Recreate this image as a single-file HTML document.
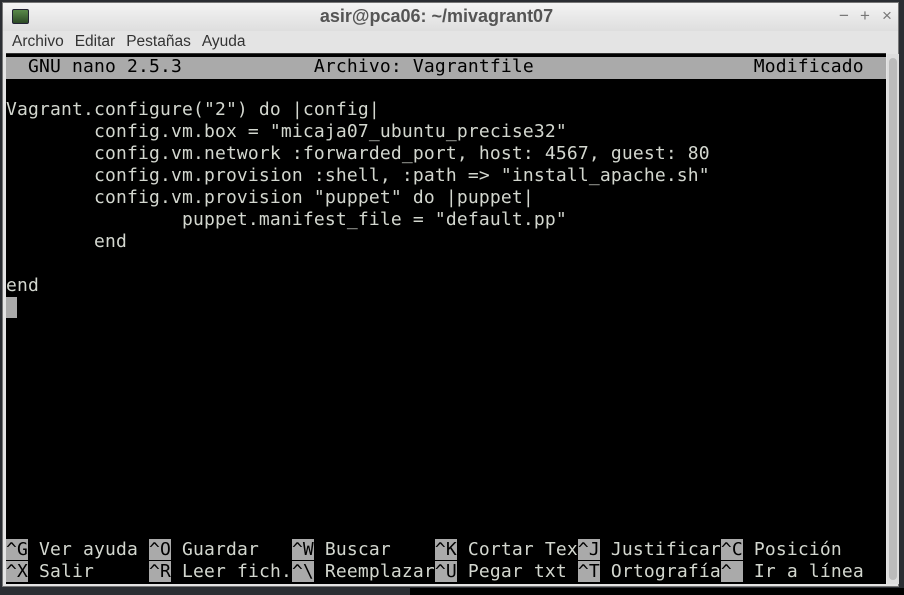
<!DOCTYPE html>
<html><head><meta charset="utf-8"><style>
*{margin:0;padding:0;box-sizing:border-box}
body{width:904px;height:595px;background:#2b2e33;position:relative;overflow:hidden;font-family:"Liberation Sans","DejaVu Sans",sans-serif}
.win{position:absolute;left:2px;top:2px;width:897px;height:585px;background:#e4e4e4;border:1px solid #777}
.title{position:absolute;left:0;top:0;width:100%;height:28px;background:linear-gradient(#f4f4f4,#dedede);}
.title .t{position:absolute;left:0;right:0;top:3px;text-align:center;font-size:18px;font-weight:bold;color:#555;padding-right:28px}
.icon{position:absolute;left:9px;top:6px;width:17px;height:15px;background:linear-gradient(#5a8a4a,#2d4a26);border-radius:2px;border:1px solid #223}
.ctl{position:absolute;top:3px;font-size:17px;color:#777}
.menu{position:absolute;left:9px;top:30px;font-size:15.5px;color:#333}
.menu span{margin-right:11px}
.term{position:absolute;left:3px;top:50px;width:880px;height:531px;background:#000;border-top:1px solid #333}
.sb{position:absolute;left:884px;top:51px;width:12px;height:530px;background:#ddd}
.sb div{position:absolute;left:2px;top:4px;width:8px;height:522px;background:#bbb;border-radius:4px}
.r{position:absolute;left:0;height:22px;line-height:22px;font-family:"DejaVu Sans Mono","Liberation Mono",monospace;font-size:18px;color:#d3d7cf;white-space:pre;letter-spacing:0.16px}
.hl{background:#aaaaaa;color:#000}
.bar{position:absolute;left:0;top:3px;width:880px;height:22px;background:#aaa}
</style></head><body>
<div class="win">
 <div class="title"><div class="icon"></div><div class="t">asir@pca06: ~/mivagrant07</div>
  <div class="ctl" style="left:836px">−</div><div class="ctl" style="left:857px">+</div><div class="ctl" style="left:879px">×</div></div>
 <div class="menu"><span>Archivo</span><span>Editar</span><span>Pestañas</span><span>Ayuda</span></div>
 <div class="term">
  <div class="bar"></div>
  <div class="r" style="top:2px;color:#000">  GNU nano 2.5.3            Archivo: Vagrantfile                    Modificado</div>
  <div class="r" style="top:45px">Vagrant.configure("2") do |config|</div>
  <div class="r" style="top:67px">        config.vm.box = "micaja07_ubuntu_precise32"</div>
  <div class="r" style="top:89px">        config.vm.network :forwarded_port, host: 4567, guest: 80</div>
  <div class="r" style="top:111px">        config.vm.provision :shell, :path =&gt; "install_apache.sh"</div>
  <div class="r" style="top:133px">        config.vm.provision "puppet" do |puppet|</div>
  <div class="r" style="top:155px">                puppet.manifest_file = "default.pp"</div>
  <div class="r" style="top:177px">        end</div>
  <div class="r" style="top:221px">end</div>
  <div class="r" style="top:243px"><span class="hl"> </span></div>
  <div class="r" style="top:485px"><span class="hl">^G</span> Ver ayuda <span class="hl">^O</span> Guardar   <span class="hl">^W</span> Buscar    <span class="hl">^K</span> Cortar Tex<span class="hl">^J</span> Justificar<span class="hl">^C</span> Posición</div>
  <div class="r" style="top:507px"><span class="hl">^X</span> Salir     <span class="hl">^R</span> Leer fich.<span class="hl">^\</span> Reemplazar<span class="hl">^U</span> Pegar txt <span class="hl">^T</span> Ortografía<span class="hl">^ </span> Ir a línea</div>
 </div>
 <div class="sb"><div></div></div>
</div>
<div style="position:absolute;left:410px;top:588px;width:494px;height:7px;background:#000"></div>
</body></html>
